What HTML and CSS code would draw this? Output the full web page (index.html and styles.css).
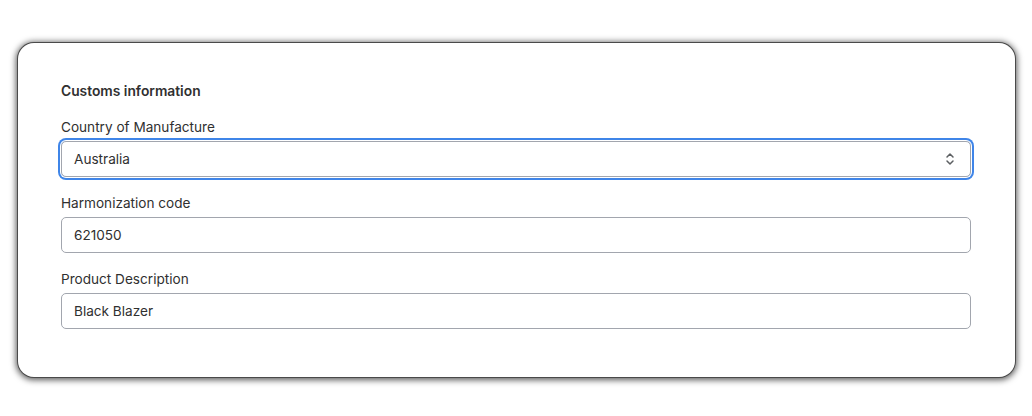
FILE: index.html
```html
<!DOCTYPE html>
<html>
<head>
<meta charset="utf-8">
<link rel="stylesheet" href="styles.css">
</head>
<body>
<div class="card">
  <h2 class="title">Customs information</h2>
  <div class="field">
    <label class="label">Country of Manufacture</label>
    <div class="control select focused">
      <span class="value">Australia</span>
      <svg class="chev" width="12" height="14" viewBox="0 0 12 14" fill="none" stroke="#5c5f62" stroke-width="1.5" stroke-linecap="round" stroke-linejoin="round"><path d="M3 5l3-3 3 3"/><path d="M3 9l3 3 3-3"/></svg>
    </div>
  </div>
  <div class="field">
    <label class="label">Harmonization code</label>
    <div class="control"><span class="value">621050</span></div>
  </div>
  <div class="field">
    <label class="label">Product Description</label>
    <div class="control"><span class="value">Black Blazer</span></div>
  </div>
</div>
</body>
</html>
```
FILE: styles.css
```css
html, body {
  margin: 0;
  padding: 0;
  background: #ffffff;
}
body {
  padding: 43px 17px 39px 18px;
  font-family: Inter, "Noto Sans", "Liberation Sans", sans-serif;
  color: #303030;
}
.card {
  background: #fff;
  border-radius: 16px;
  height: 334px;
  box-sizing: border-box;
  padding: 38px 44px 0 43px;
  box-shadow: 0 0 0 1px #4a4a4a, 0 1px 6px 2px rgba(0,0,0,0.65);
  display: flex;
  flex-direction: column;
  gap: 16px;
}
.title {
  margin: 0;
  font-size: 13.8px;
  line-height: 20px;
  font-weight: 600;
  color: #303030;
}
.field {
  display: flex;
  flex-direction: column;
  gap: 4px;
}
.label {
  font-size: 13.6px;
  line-height: 20px;
  color: #303030;
}
.control {
  height: 36px;
  box-sizing: border-box;
  border: 1px solid #a2a6ae;
  border-radius: 5px;
  display: flex;
  align-items: center;
  padding: 0 12px;
  font-size: 13.6px;
}
.control.focused {
  border-color: #a2a6ae;
  box-shadow: 0 0 0 1px #fff, 0 0 0 3px #3f85e8;
}
.value {
  flex: 1;
  color: #303030;
}
.chev {
  margin-right: 2px;
}
```
